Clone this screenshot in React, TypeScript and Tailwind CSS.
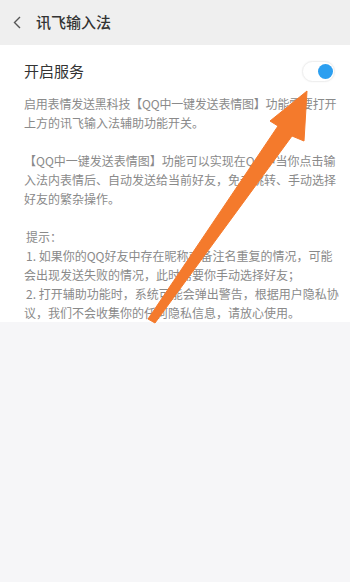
import React from 'react';

const lines: { text: string; indent?: boolean; tight?: boolean }[] = [
  { text: '启用表情发送黑科技【QQ中一键发送表情图】功能需要打开', tight: true },
  { text: '上方的讯飞输入法辅助功能开关。' },
  { text: '' },
  { text: '【QQ中一键发送表情图】功能可以实现在QQ中当你点击输' },
  { text: '入法内表情后、自动发送给当前好友，免去跳转、手动选择' },
  { text: '好友的繁杂操作。' },
  { text: '' },
  { text: '提示：', indent: true },
  { text: '1. 如果你的QQ好友中存在昵称或备注名重复的情况，可能', indent: true },
  { text: '会出现发送失败的情况，此时需要你手动选择好友；' },
  { text: '2. 打开辅助功能时，系统可能会弹出警告，根据用户隐私协', indent: true },
  { text: '议，我们不会收集你的任何隐私信息，请放心使用。' },
];

const Arrow: React.FC = () => (
  <svg className="absolute left-0 top-0 pointer-events-none" width="350" height="582" viewBox="0 0 350 582">
    <polygon
      points="307,91 270,121 278,126 148,319 155,323 292,136 304,141"
      fill="#f47a2c"
      stroke="#f47a2c"
      strokeWidth="1"
      strokeLinejoin="round"
    />
  </svg>
);

const App: React.FC = () => {
  return (
    <div className="relative w-full min-h-screen bg-[#f6f6f8] font-['Noto_Sans_CJK_SC','Noto_Sans',sans-serif]">
      {/* Header */}
      <div className="h-[45px] bg-[#efefef] flex items-center">
        <svg className="ml-[13px]" width="8" height="13" viewBox="0 0 8 13">
          <path d="M7 1 L1.5 6.5 L7 12" fill="none" stroke="#555" strokeWidth="1.4" />
        </svg>
        <span className="ml-[15px] text-[15px] font-medium text-[#333]">讯飞输入法</span>
      </div>

      {/* Content */}
      <div className="bg-white pl-[24px] pr-[15px]">
        <div className="h-[49px] pt-[4px] flex items-center justify-between">
          <span className="text-[15px] text-[#333]">开启服务</span>
          <div className="relative w-[33px] h-[21px] rounded-full bg-white border border-[#efefef] shadow-[0_0_2px_rgba(0,0,0,0.06)]">
            <div className="absolute right-[1px] top-[2px] w-[15px] h-[15px] rounded-full bg-[#2c9ff0]" />
          </div>
        </div>
        <div className="text-[12px] leading-[19px] text-[#8a8a8a]">
          {lines.map((l, i) => (
            <div
              key={i}
              className={`h-[19px] whitespace-nowrap ${l.indent ? 'pl-[2px]' : ''} ${l.tight ? 'tracking-[-0.2px]' : ''}`}
            >
              {l.text}
            </div>
          ))}
        </div>
      </div>

      <Arrow />
    </div>
  );
};

export default App;
